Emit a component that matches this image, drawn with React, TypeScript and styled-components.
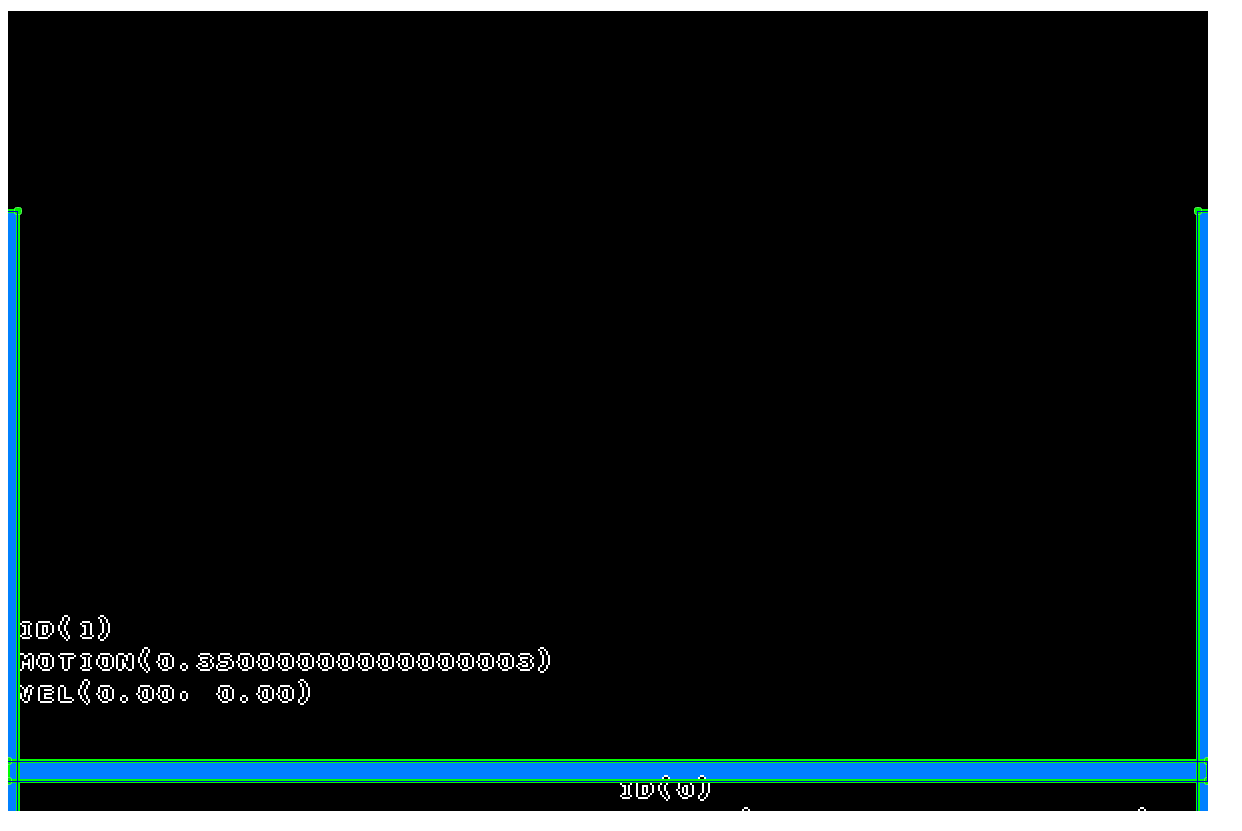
import React from "react";
import styled, { createGlobalStyle } from "styled-components";

const GlobalStyle = createGlobalStyle`
  body { margin: 0; background: #fff; overflow: hidden; }
`;

const Page = styled.main`
  padding: 11px 0 0 8px;
`;

const Scene = styled.section`
  position: relative;
  width: 1200px;
  height: 800px;
  background: #000;
  overflow: hidden;
`;

const Layer = styled.svg`
  position: absolute;
  inset: 0;
  display: block;
`;

const LabelLayer = styled.div`
  position: absolute;
  inset: 0;
  overflow: hidden;
  filter: url(#pixel-outline);
`;

const Label = styled.div<{ $x: number; $y: number }>`
  position: absolute;
  left: ${(p) => p.$x}px;
  top: ${(p) => p.$y}px;
  font: 400 19px/32px "DejaVu Sans Mono", monospace;
  -webkit-text-stroke: 0.6px #fff;
  color: #fff;
  white-space: pre;
`;

const Line = styled.div`
  height: 32px;
  display: flex;
`;

type Shape = { sx?: number; sy?: number; dx?: number; dy?: number; plain?: boolean };

const Glyph = styled.span<{ $s: Shape }>`
  width: 20px;
  height: 32px;
  display: flex;
  justify-content: center;
  font-family: ${(p) => (p.$s.plain ? '"DejaVu Sans", sans-serif' : "inherit")};
  transform: translate(${(p) => p.$s.dx ?? -1}px, ${(p) => p.$s.dy ?? 0}px)
    scale(${(p) => p.$s.sx ?? 1.4}, ${(p) => p.$s.sy ?? 1});
`;

const shapes: Record<string, Shape> = {
  "(": { dx: -2.5, dy: -2, sx: 1.75, sy: 1.18 },
  ")": { dx: -2, dy: -2, sx: 1.75, sy: 1.18 },
  "0": { plain: true, sx: 1.3 },
  ".": { dx: -2, sx: 1.2 },
  ",": { dx: -2, dy: -2, sx: 1.5, sy: 0.9 },
  I: { dx: 0, sx: 1 },
  T: { dx: 0, sx: 1.2 },
  "1": { dx: 0, sx: 1.35 },
  V: { sx: 1.2 },
};

const labels = [
  { x: 8, y: 602, lines: ["ID(1)", "MOTION(0.35000000000000003)", "VEL(0.00, 0.00)"] },
  { x: 608, y: 762, lines: ["ID(0)", "MOTION(0.35000000000000003)"] },
];

const corners = [
  [10, 200],
  [1190, 200],
  [0, 750],
  [0, 770],
  [1200, 750],
  [1200, 770],
];

function PixelOutline() {
  return (
    <filter id="pixel-outline" filterUnits="userSpaceOnUse" x="0" y="0" width="1200" height="800" colorInterpolationFilters="sRGB">
      <feComponentTransfer in="SourceGraphic" result="hard">
        <feFuncA type="discrete" tableValues="0 1" />
      </feComponentTransfer>
      <feFlood x="0" y="0" width="1" height="1" floodColor="#fff" />
      <feComposite x="0" y="0" width="2" height="2" operator="over" in2="SourceGraphic" />
      <feTile result="grid" />
      <feComposite in="hard" in2="grid" operator="in" result="p0" />
      <feOffset in="p0" dx="1" dy="0" result="p1" />
      <feOffset in="p0" dx="0" dy="1" result="p2" />
      <feOffset in="p0" dx="1" dy="1" result="p3" />
      <feMerge result="solid">
        <feMergeNode in="p0" />
        <feMergeNode in="p1" />
        <feMergeNode in="p2" />
        <feMergeNode in="p3" />
      </feMerge>
      <feOffset in="solid" dx="-2" dy="0" result="o0" />
      <feOffset in="solid" dx="2" dy="0" result="o1" />
      <feOffset in="solid" dx="0" dy="-2" result="o2" />
      <feOffset in="solid" dx="0" dy="2" result="o3" />
      <feFlood floodColor="#000" />
      <feComposite in2="solid" operator="in" result="core" />
      <feMerge>
        <feMergeNode in="o0" />
        <feMergeNode in="o1" />
        <feMergeNode in="o2" />
        <feMergeNode in="o3" />
        <feMergeNode in="core" />
      </feMerge>
    </filter>
  );
}

export default function App() {
  return (
    <>
      <GlobalStyle />
      <Page>
        <Scene>
          <Layer width="1200" height="800" shapeRendering="crispEdges">
            <defs>
              <PixelOutline />
            </defs>
            <g fill="#0080ff">
              <rect x="0" y="200" width="10" height="600" />
              <rect x="1190" y="200" width="10" height="600" />
              <rect x="0" y="750" width="1200" height="20" />
            </g>
          </Layer>
          <LabelLayer>
            {labels.map((l) => (
              <Label key={l.x} $x={l.x} $y={l.y}>
                {l.lines.map((t) => (
                  <Line key={t}>
                    {t.split("").map((c, i) => (
                      <Glyph key={i} $s={shapes[c] ?? {}}>
                        {c}
                      </Glyph>
                    ))}
                  </Line>
                ))}
              </Label>
            ))}
          </LabelLayer>
          <Layer width="1200" height="800">
            <g fill="none" stroke="#0f0" strokeWidth="4" shapeRendering="crispEdges">
              <path d="M-4 200H10V804M1204 200H1190V804" />
              <rect x="0" y="750" width="1200" height="20" />
            </g>
            <g fill="#00f000" stroke="#58f058" strokeWidth="1">
              {corners.map(([x, y]) => (
                <rect key={`${x}-${y}`} x={x - 3.5} y={y - 3.5} width="7" height="7" rx="2" />
              ))}
            </g>
            <g fill="none" stroke="#0000c8" strokeWidth="1" shapeRendering="crispEdges">
              <path d="M0 200.5H9.5V800M1200 200.5H1189.5V800M0 750.5H1199.5V770.5H0" />
            </g>
          </Layer>
        </Scene>
      </Page>
    </>
  );
}
